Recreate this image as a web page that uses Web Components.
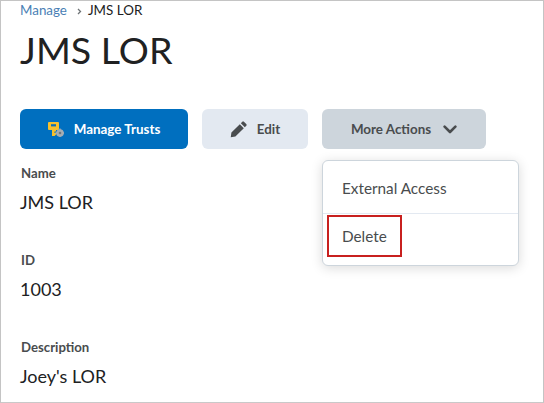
<!DOCTYPE html>
<html>
<head>
<meta charset="utf-8">
<title>JMS LOR</title>
<style>
  html, body { margin: 0; padding: 0; background: #fff; }
  body { font-family: Lato, "Liberation Sans", sans-serif; color: #202122; }
</style>
</head>
<body>
<lor-page>
  <bread-crumbs slot="crumbs" parent="Manage" current="JMS LOR"></bread-crumbs>
  <h1 slot="title">JMS LOR</h1>
  <action-button slot="actions" kind="primary" width="168">
    <svg slot="icon" width="16" height="15" viewBox="0 0 16 15">
      <path fill="#f6c02c" d="M1 0h9a1 1 0 0 1 1 1v6a1 1 0 0 1-1 1H8v1.500H6.500V11H8v1.500L6.500 14H4V8H1a1 1 0 0 1-1-1V1a1 1 0 0 1 1-1z"/>
      <rect x="3" y="2.200" width="5" height="2.200" fill="#0b6fb8"/>
      <circle cx="12" cy="11" r="3.800" fill="#a5adb4"/>
      <path stroke="#a5adb4" stroke-width="1.400" d="M12 6.400v8.600M7.400 11h8.600"/>
      <circle cx="12" cy="11" r="1.300" fill="#6c7780"/>
    </svg>
    Manage Trusts
  </action-button>
  <action-button slot="actions" kind="light" width="106">
    <svg slot="icon" width="17" height="17" viewBox="0 0 18 18">
      <path fill="#494c4e" d="M13 .8a1.200 1.200 0 0 1 1.700 0l2.500 2.500a1.200 1.200 0 0 1 0 1.700l-1.500 1.500-4.200-4.200zM10.400 3.400l4.200 4.200L5.700 16.500.8 17.200l.7-4.900z"/>
    </svg>
    Edit
  </action-button>
  <action-button slot="actions" kind="open" width="164" trailing>
    More Actions
    <svg slot="trail" width="14" height="9" viewBox="0 0 14 9">
      <path fill="none" stroke="#494c4e" stroke-width="2.600" stroke-linecap="round" stroke-linejoin="round" d="M1.600 1.600 7 7l5.400-5.400"/>
    </svg>
  </action-button>
  <dropdown-menu slot="menu">
    <menu-row>External Access</menu-row>
    <menu-row highlighted>Delete</menu-row>
  </dropdown-menu>
  <detail-field slot="fields" label="Name">JMS LOR</detail-field>
  <detail-field slot="fields" label="ID">1003</detail-field>
  <detail-field slot="fields" label="Description">Joey's LOR</detail-field>
</lor-page>

<script>
class LorPage extends HTMLElement {
  constructor() {
    super();
    this.attachShadow({ mode: 'open' }).innerHTML = `
    <style>
      :host {
        display: block;
        box-sizing: border-box;
        position: relative;
        width: 544px;
        height: 403px;
        overflow: hidden;
        border: 1px solid #c4c4c4;
        border-bottom-color: #c9c9c9;
        padding: 0 0 0 19px;
        background: #fff;
      }
      ::slotted(h1) {
        margin: 7px 0 0 0;
        font-size: 37.600px;
        line-height: 50px;
        font-weight: 400;
        color: #202122;
      }
      .actions {
        display: flex;
        gap: 14px;
        margin-top: 34px;
      }
      .fields {
        display: flex;
        flex-direction: column;
        gap: 37px;
        margin-top: 16px;
      }
    </style>
    <slot name="crumbs"></slot>
    <slot name="title"></slot>
    <div class="actions"><slot name="actions"></slot></div>
    <slot name="menu"></slot>
    <div class="fields"><slot name="fields"></slot></div>
    `;
  }
}

class BreadCrumbs extends HTMLElement {
  constructor() {
    super();
    this.shadowDOM = this.attachShadow({ mode: 'open' });
  }

  connectedCallback() {
    this.shadowDOM.innerHTML = `
    <style>
      :host {
        display: flex;
        align-items: center;
        height: 17px;
        font-size: 13.400px;
        color: #202122;
      }
      a { color: #4a7fb5; text-decoration: none; }
      svg { margin: 3px 6px 0 10px; }
    </style>
    <a href="#">${this.getAttribute('parent')}</a>
    <svg width="5" height="7" viewBox="0 0 5 7"><path fill="none" stroke="#6e7376" stroke-width="1.300" d="M1 1l2.500 2.500L1 6"/></svg>
    <span>${this.getAttribute('current')}</span>
    `;
  }
}

class ActionButton extends HTMLElement {
  constructor() {
    super();
    this.shadowDOM = this.attachShadow({ mode: 'open' });
  }

  connectedCallback() {
    this.shadowDOM.innerHTML = `
    <style>
      :host {
        display: flex;
        align-items: center;
        justify-content: center;
        box-sizing: border-box;
        width: ${this.getAttribute('width')}px;
        height: 40px;
        border-radius: 6px;
        font-size: 13.400px;
        font-weight: 700;
        color: #494c4e;
      }
      :host([kind="primary"]) { background: #006fbf; color: #fff; }
      :host([kind="light"]) { background: #e3e9f1; color: #494c4e; }
      :host([kind="open"]) { background: #cdd5dc; color: #494c4e; }
      ::slotted(svg) { display: block; }
      ::slotted(svg[slot="icon"]) { margin-right: 10px; }
      ::slotted(svg[slot="trail"]) { margin-left: 12px; }
    </style>
    <slot name="icon"></slot>
    <span><slot></slot></span>
    <slot name="trail"></slot>
    `;
  }
}

class DropdownMenu extends HTMLElement {
  constructor() {
    super();
    this.attachShadow({ mode: 'open' }).innerHTML = `
    <style>
      :host {
        display: block;
        box-sizing: border-box;
        position: absolute;
        left: 321px;
        top: 159px;
        width: 197px;
        height: 106px;
        padding-top: 5px;
        background: #fff;
        border: 1px solid #cdd5dc;
        border-radius: 6px;
        box-shadow: 0 2px 12px rgba(0, 0, 0, .15);
      }
    </style>
    <slot></slot>
    `;
  }
}

class MenuRow extends HTMLElement {
  constructor() {
    super();
    this.attachShadow({ mode: 'open' }).innerHTML = `
    <style>
      :host {
        display: flex;
        align-items: center;
        position: relative;
        box-sizing: border-box;
        height: 47px;
        padding-left: 19px;
        padding-bottom: 4px;
        font-size: 15.300px;
        color: #494c4e;
      }
      :host([highlighted]) {
        border-top: 1px solid #e3e9f1;
        height: 52px;
        padding-bottom: 8px;
      }
      /* red annotation drawn on top of the row */
      .mark { display: none; }
      :host([highlighted]) .mark {
        display: block;
        position: absolute;
        left: 4px;
        top: 1px;
        width: 75px;
        height: 42px;
        box-sizing: border-box;
        border: 2px solid #c8201f;
      }
    </style>
    <slot></slot>
    <div class="mark"></div>
    `;
  }
}

class DetailField extends HTMLElement {
  constructor() {
    super();
    this.shadowDOM = this.attachShadow({ mode: 'open' });
  }

  connectedCallback() {
    this.shadowDOM.innerHTML = `
    <style>
      :host { display: block; color: #202122; }
      .label {
        height: 17px;
        line-height: 17px;
        padding-left: 1px;
        font-size: 13.200px;
        font-weight: 700;
        color: #494c4e;
      }
      .value {
        margin-top: 8px;
        height: 25px;
        line-height: 25px;
        font-size: 18px;
      }
    </style>
    <div class="label">${this.getAttribute('label')}</div>
    <div class="value"><slot></slot></div>
    `;
  }
}

customElements.define('lor-page', LorPage);
customElements.define('bread-crumbs', BreadCrumbs);
customElements.define('action-button', ActionButton);
customElements.define('dropdown-menu', DropdownMenu);
customElements.define('menu-row', MenuRow);
customElements.define('detail-field', DetailField);
</script>
</body>
</html>
